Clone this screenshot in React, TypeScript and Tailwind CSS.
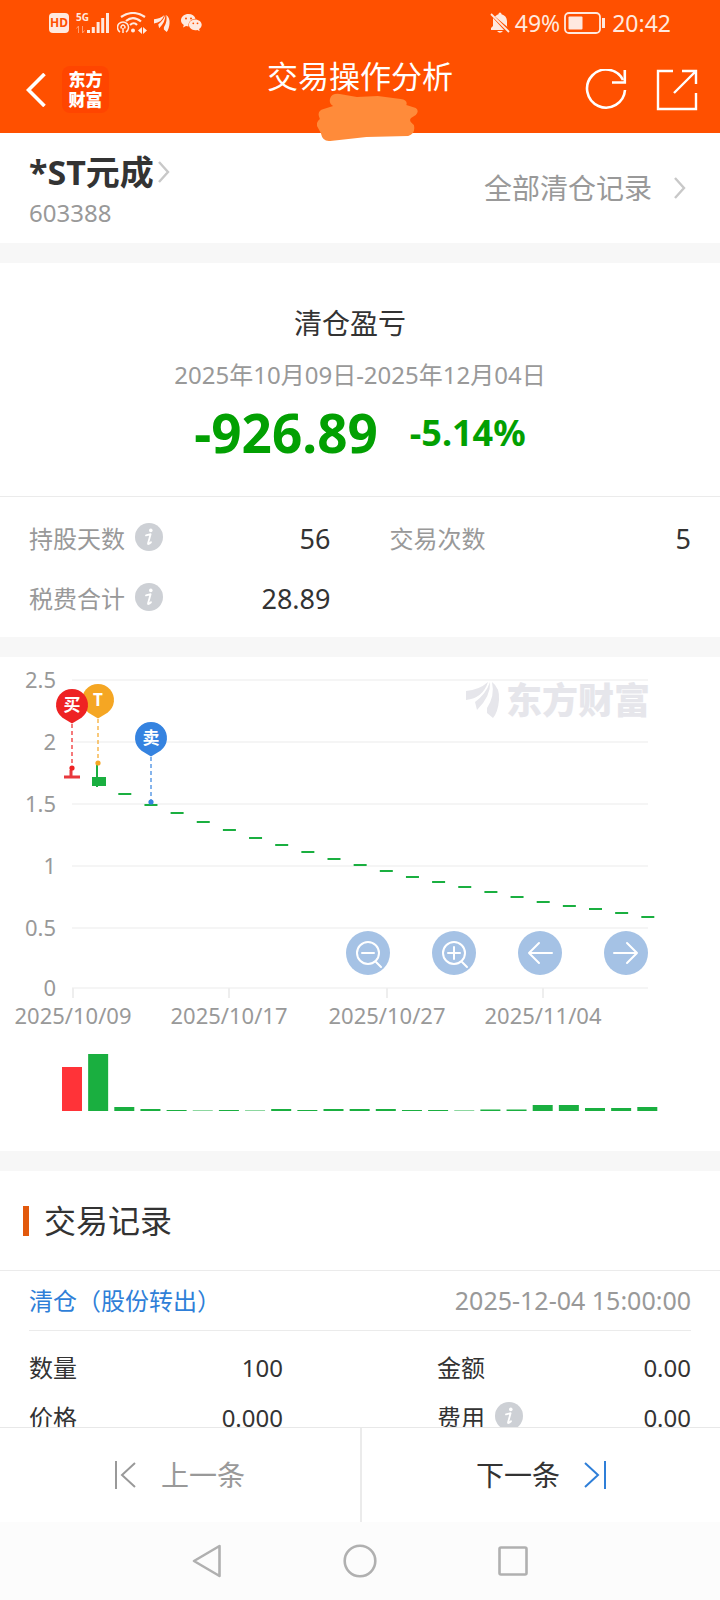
import React from 'react';

const GREEN = '#1aaf40';

// y positions of the daily closes, starting from the third trading day
const closes = [137, 148, 156, 165, 173, 181, 188, 195, 202, 208, 214, 220, 225, 230, 235, 240, 245, 249, 252, 256, 260];
const volumes = [44, 57, 4, 2, 1, 0.5, 1, 0.5, 2, 1, 2, 2, 2, 1, 1, 0.5, 1.5, 1.5, 6, 6, 3, 3, 4];

const yAxis = [
  { label: '2.5', y: 23 },
  { label: '2', y: 85 },
  { label: '1.5', y: 147 },
  { label: '1', y: 209 },
  { label: '0.5', y: 271 },
  { label: '0', y: 331 },
];

const xAxis = [
  { label: '2025/10/09', x: 73 },
  { label: '2025/10/17', x: 229 },
  { label: '2025/10/27', x: 387 },
  { label: '2025/11/04', x: 543 },
];

const dayX = (i: number) => 72 + i * 26.15;

const InfoButton: React.FC<{ label: string }> = ({ label }) => (
  <button type="button" aria-label={label} className="mb-1 shrink-0">
    <svg width="28" height="28" viewBox="0 0 28 28">
      <circle cx="14" cy="14" r="14" fill="#cdd0d5" />
      <circle cx="15.8" cy="7.4" r="1.8" fill="#fff" />
      <path d="M11 12.4 L15.600 11.200 L13 20.400 Q12.800 22 16 19.200" fill="none" stroke="#fff" strokeWidth="1.8" strokeLinejoin="round" strokeLinecap="round" />
    </svg>
  </button>
);

const Chevron: React.FC = () => (
  <svg width="12" height="22" viewBox="0 0 12 22" fill="none" stroke="#c8c8c8" strokeWidth="2.400">
    <path d="M1 1 L10 11 L1 21" />
  </svg>
);

const Feather: React.FC<{ className?: string }> = ({ className = '' }) => (
  <svg viewBox="0 0 34 36" className={className} fill="currentColor">
    <path d="M0 9 Q13 8 22 0 Q17 16 0 18 Z" />
    <path d="M24 0 Q25 14 11 28 L9 20 Q20 12 24 0 Z" />
    <path d="M26 0 Q34 6 33 18 Q32 30 27 36 L21 31 L21 26 Q29 14 26 0 Z" />
  </svg>
);

const StatusBar: React.FC = () => (
  <div className="flex h-[46px] items-center justify-between px-[49px] text-[#ffe9df]">
    <div className="flex items-center gap-[7px]">
      <span className="flex h-5 w-5 items-center justify-center rounded bg-[#ffe9df] text-[12px] font-bold leading-5 text-[#ff5000]">HD</span>
      <svg width="34" height="24" viewBox="0 -2 34 24" fill="currentColor" className="overflow-visible">
        <text x="0" y="8" fontSize="10" fontWeight="700">5G</text>
        <path d="M2.500 13v7M6.500 13v7M2.500 13l-2 2.500M6.500 20l2-2.500" stroke="currentColor" opacity=".5" />
        <rect x="11" y="17" width="3" height="3" />
        <rect x="15.800" y="14" width="3" height="6" />
        <rect x="20.600" y="9" width="3" height="11" />
        <rect x="25.200" y="5" width="3" height="15" />
        <rect x="30" y="0" width="3" height="20" />
      </svg>
      <svg width="30" height="22" viewBox="0 0 30 22" fill="none" stroke="currentColor" strokeWidth="2.200">
        <path d="M4 5 Q16 -3 28 5" />
        <path d="M9 9 Q16 3 24 9.500" />
        <path d="M13 13 Q17 9.500 20 13" />
        <path d="M3 20 A5.500 5.500 0 1 1 9 20" strokeWidth="1.500" />
        <path d="M4.500 16.500 A2 2 0 1 1 7.500 16.500M6 16v5" strokeWidth="1.500" />
        <circle cx="16" cy="18.500" r="2" fill="currentColor" stroke="none" />
        <path d="M25 15v7l-4-3.500zM26 15v7l4-3.500z" fill="currentColor" stroke="none" />
      </svg>
      <Feather className="h-[17px] w-4" />
      <svg width="21" height="18" viewBox="0 0 21 18" fill="currentColor" className="ml-1">
        <path d="M7.500 0C3.400 0 0 2.700 0 6.200c0 2 1.100 3.700 2.800 4.800L2 13.500l3-1.500c.9.300 1.600.4 2.500.4C7 8 10 5 14.500 4.700 13.700 2 11 0 7.500 0z" />
        <path d="M14.200 5.500c-3.500 0-6.300 2.300-6.300 5.300s2.800 5.400 6.300 5.400c.8 0 1.500-.1 2.200-.3l2.300 1.400-.6-2.200c1.500-1 2.600-2.500 2.600-4.300 0-3-3-5.300-6.500-5.300z" />
        <g fill="#ff5000">
          <circle cx="5" cy="4.500" r="1" />
          <circle cx="10" cy="4.500" r="1" />
          <circle cx="12.300" cy="9.300" r=".9" />
          <circle cx="16.500" cy="9.300" r=".9" />
        </g>
      </svg>
    </div>
    <div className="flex items-center text-[23px] leading-6">
      <svg width="22" height="22" viewBox="0 0 22 22" fill="currentColor">
        <path d="M4 6 L15 18 H2 V16 L4 14 Z M6 4.500 Q8 2.500 9.500 2.200 Q9.500 .5 11 .5 Q12.500 .5 12.500 2.200 Q17.500 3.500 18 9 V14 L18.500 15 Z M8 19 h6 q-3 3.500 -6 0z" />
        <path d="M2 2 L20 20" stroke="currentColor" strokeWidth="1.800" />
      </svg>
      <span className="ml-1">49%</span>
      <svg width="42" height="22" viewBox="0 0 42 22" className="ml-1 mr-[6px]">
        <rect x="1" y="1" width="35" height="20" rx="4" fill="none" stroke="currentColor" strokeWidth="1.800" />
        <rect x="4.500" y="4.500" width="14" height="13" rx="1" fill="currentColor" />
        <path d="M39.500 6v10" stroke="currentColor" strokeWidth="3" />
      </svg>
      <span>20:42</span>
    </div>
  </div>
);

const Header: React.FC = () => (
  <header className="relative z-10 shrink-0 bg-[#ff5000] text-white">
    <StatusBar />
    <div className="grid h-[87px] grid-cols-[1fr_auto_1fr] items-center px-[22px]">
      <div className="flex items-center gap-4 pl-1">
        <button type="button" aria-label="返回">
          <svg width="20" height="34" viewBox="0 0 20 34" fill="none" stroke="#fff" strokeWidth="3.600">
            <path d="M18.500 1 L2.500 17 L18.500 33" />
          </svg>
        </button>
        <div className="flex h-[47px] w-[47px] flex-col items-center justify-center rounded-lg bg-[#ff4500] text-[17px] font-black leading-5">
          <span>东方</span>
          <span>财富</span>
        </div>
      </div>
      <div className="relative self-start">
        <h1 className="text-[31px] leading-[60px]">交易操作分析</h1>
        <svg width="102" height="50" viewBox="0 0 102 50" className="absolute left-[50px] top-[47px]" fill="#ff8b3a">
          <path d="M14 5 Q16 0 24 1 L42 4 L64 3 L88 6 Q96 7 94 12 L104 15 Q108 18 104 22 L99 25 Q96 28 102 32 Q104 41 96 43 L52 44 L14 48 Q6 49 4 40 L0 33 Q-1 29 3 26 Q-1 18 7 16 L17 13 Q12 10 14 5 Z" transform="scale(.95 1)" />
        </svg>
      </div>
      <div className="flex items-center justify-end gap-[29px]">
        <button type="button" aria-label="刷新">
          <svg width="42" height="42" viewBox="0 0 42 42" fill="none" stroke="#fff" strokeWidth="2.600">
            <path d="M38 11 A19 19 0 1 0 40 21" />
            <path d="M39.800 1 V13.500 H27" />
          </svg>
        </button>
        <button type="button" aria-label="分享">
          <svg width="42" height="42" viewBox="0 0 42 42" fill="none" stroke="#fff" strokeWidth="2.400">
            <path d="M17 2 H2 V40 H40 V24" />
            <path d="M26 2 H40 V15 M40 2 L18 24" />
          </svg>
        </button>
      </div>
    </div>
  </header>
);

interface PinProps {
  x: number;
  y: number;
  end: number;
  color: string;
  label: string;
}

const Pin: React.FC<PinProps> = ({ x, y, end, color, label }) => (
  <g>
    <path d={`M${x} ${y + 19} V${end}`} stroke={color} strokeWidth="1.200" strokeDasharray="4 3" />
    <circle cx={x} cy={end} r="2.600" fill={color} />
    <path
      d={`M${x} ${y + 18.5} L${x - 9.5} ${y + 12.8} A16 16 0 1 1 ${x + 9.5} ${y + 12.8} Z`}
      fill={color}
    />
    <text x={x} y={y + 6} fontSize="17" fontWeight="700" fill="#fff" textAnchor="middle">{label}</text>
  </g>
);

const controls = [
  { label: '缩小', icon: <><circle cx="22" cy="22" r="11" /><path d="M16 22h12M30 31l5 5" /></> },
  { label: '放大', icon: <><circle cx="22" cy="22" r="11" /><path d="M16 22h12M22 16v12M30 31l5 5" /></> },
  { label: '向左', icon: <path d="M34 22H11M21 12L11 22l10 10" /> },
  { label: '向右', icon: <path d="M10 22h23M23 12l10 10-10 10" /> },
];

const TradeChart: React.FC = () => (
  <section className="relative">
    <svg viewBox="0 0 720 494" className="block w-full">
      {yAxis.map(({ label, y }) => (
        <g key={label}>
          <path d={`M72 ${y} H648`} stroke="#f5f5f5" strokeWidth="2" />
          <text x="56" y={y + 8} fontSize="22" fill="#999" textAnchor="end">{label}</text>
        </g>
      ))}
      {xAxis.map(({ label, x }) => (
        <g key={label}>
          <path d={`M${x} 331 V341`} stroke="#eee" strokeWidth="2" />
          <text x={x} y="367" fontSize="22" fill="#999" textAnchor="middle">{label}</text>
        </g>
      ))}

      <g transform="translate(466 25)" fill="#e6e6eb">
        <path d="M0 9 Q13 8 22 0 Q17 16 0 18 Z" />
        <path d="M24 0 Q25 14 11 28 L9 20 Q20 12 24 0 Z" />
        <path d="M26 0 Q34 6 33 18 Q32 30 27 36 L21 31 L21 26 Q29 14 26 0 Z" />
        <text x="40" y="32" fontSize="36" fontWeight="900">东方财富</text>
      </g>

      <path d="M64 120h16M71 113v7" stroke="#e8383d" strokeWidth="3" />
      <path d="M97 108v22" stroke={GREEN} strokeWidth="2" />
      <rect x="92" y="120" width="14" height="9" fill={GREEN} />
      {closes.map((y, i) => (
        <rect key={i} x={dayX(i + 2) - 6} y={y - 1} width="13" height="2" fill={GREEN} />
      ))}

      <Pin x={98} y={43} end={106} color="#f5a623" label="T" />
      <Pin x={72} y={48} end={111} color="#ee2223" label="买" />
      <Pin x={151} y={81} end={145} color="#3583e0" label="卖" />

      {volumes.map((h, i) => (
        <rect key={i} x={dayX(i) - 10} y={454 - h} width="20" height={h} fill={i === 0 ? '#ff3338' : GREEN} />
      ))}
    </svg>
    <div className="absolute right-[10%] top-[274px] flex gap-[42px]">
      {controls.map(({ label, icon }) => (
        <button key={label} type="button" aria-label={label} className="h-11 w-11 rounded-full bg-[#a5c2e5]">
          <svg viewBox="0 0 44 44" fill="none" stroke="#fff" strokeWidth="2" strokeLinecap="round" strokeLinejoin="round">
            {icon}
          </svg>
        </button>
      ))}
    </div>
  </section>
);

interface RowProps {
  label: string;
  value: string;
  info?: boolean;
}

const StatRow: React.FC<RowProps> = ({ label, value, info = false }) => (
  <div className="flex h-[60px] items-center justify-between">
    <dt className="flex items-center gap-[10px] text-2xl text-[#999]">
      {label}
      {info && <InfoButton label={`${label}说明`} />}
    </dt>
    <dd className="text-[27px]">{value}</dd>
  </div>
);

const RecordRow: React.FC<RowProps> = ({ label, value, info = false }) => (
  <div className="flex h-[50px] items-center justify-between text-2xl">
    <dt className="flex items-center gap-[10px]">
      {label}
      {info && <InfoButton label={`${label}说明`} />}
    </dt>
    <dd>{value}</dd>
  </div>
);

const Divider: React.FC = () => <div className="h-5 bg-[#f7f7f7]" />;

const App: React.FC = () => {
  return (
    <div className="flex h-screen flex-col overflow-hidden bg-white font-['Noto_Sans','Noto_Sans_CJK_SC',sans-serif] text-[#333]">
      <Header />

      <main className="min-h-0 flex-1 overflow-y-auto [scrollbar-width:none]">
        <section className="flex items-start justify-between pb-[10px] pl-[29px] pr-[34px] pt-[19px]">
          <div>
            <a href="#stock" className="flex items-center gap-1 text-[34px] font-bold leading-10">
              *ST元成
              <Chevron />
            </a>
            <p className="text-2xl leading-[41px] text-[#999]">603388</p>
          </div>
          <a href="#all" className="mt-4 flex items-center gap-[22px] text-[28px] leading-10 text-[#999]">
            全部清仓记录
            <Chevron />
          </a>
        </section>

        <Divider />

        <section className="border-b border-[#ebebeb] pb-[37px] pt-10 text-center">
          <h2 className="pr-5 text-[28px] leading-10">清仓盈亏</h2>
          <p className="mt-3 text-2xl leading-10 text-[#999]">2025年10月09日-2025年12月04日</p>
          <div className="mt-3 flex items-center justify-center gap-8 font-bold text-[#02a002]">
            <span className="text-[53px] leading-[52px]">-926.89</span>
            <span className="text-[36px] leading-[52px]">-5.14%</span>
          </div>
        </section>

        <dl className="grid grid-cols-2 gap-x-[59px] px-[29px] pb-2 pt-3">
          <StatRow label="持股天数" value="56" info />
          <StatRow label="交易次数" value="5" />
          <StatRow label="税费合计" value="28.89" info />
        </dl>

        <Divider />
        <TradeChart />
        <Divider />

        <section>
          <h2 className="flex h-[100px] items-center gap-[15px] border-b border-[#ebebeb] pl-[23px] text-[32px]">
            <span className="h-[30px] w-[6px] bg-[#e2590c]" />
            交易记录
          </h2>
          <div className="px-[29px]">
            <div className="flex h-[60px] items-center justify-between border-b border-[#ebebeb]">
              <h3 className="text-2xl text-[#2f7fd8]">清仓（股份转出）</h3>
              <time className="text-[25px] text-[#999]">2025-12-04 15:00:00</time>
            </div>
            <dl className="grid grid-cols-2 gap-x-[154px] pt-3">
              <RecordRow label="数量" value="100" />
              <RecordRow label="金额" value="0.00" />
              <RecordRow label="价格" value="0.000" />
              <RecordRow label="费用" value="0.00" info />
            </dl>
          </div>
        </section>
      </main>

      <footer className="shrink-0">
        <div className="grid h-[95px] grid-cols-2 border-t border-[#e8e8e8] text-[28px]">
          <button type="button" className="flex items-center justify-center gap-6 text-[#999]">
            <svg width="22" height="28" viewBox="0 0 22 28" fill="none" stroke="#999" strokeWidth="2">
              <path d="M1 0v28M20 2L7 14l13 12" />
            </svg>
            上一条
          </button>
          <button type="button" className="flex items-center justify-center gap-6 border-l-2 border-[#ebebeb]">
            下一条
            <svg width="22" height="28" viewBox="0 0 22 28" fill="none" stroke="#2f7fd8" strokeWidth="2">
              <path d="M21 0v28M1 2l13 12L1 26" />
            </svg>
          </button>
        </div>
        <nav className="flex h-[78px] items-center justify-center gap-[121px] bg-[#fcfcfc]">
          <button type="button" aria-label="后退">
            <svg width="30" height="34" viewBox="0 0 30 34" fill="none" stroke="#b0b0b0" strokeWidth="2.600" strokeLinejoin="round">
              <path d="M27.500 2 V32 L2 17 Z" />
            </svg>
          </button>
          <button type="button" aria-label="主页">
            <svg width="34" height="34" viewBox="0 0 34 34" fill="none" stroke="#b0b0b0" strokeWidth="2.600">
              <circle cx="17" cy="17" r="15.300" />
            </svg>
          </button>
          <button type="button" aria-label="最近任务">
            <svg width="30" height="30" viewBox="0 0 30 30" fill="none" stroke="#b0b0b0" strokeWidth="2.600">
              <rect x="1.500" y="1.500" width="27" height="27" rx="1.500" />
            </svg>
          </button>
        </nav>
      </footer>
    </div>
  );
};

export default App;
